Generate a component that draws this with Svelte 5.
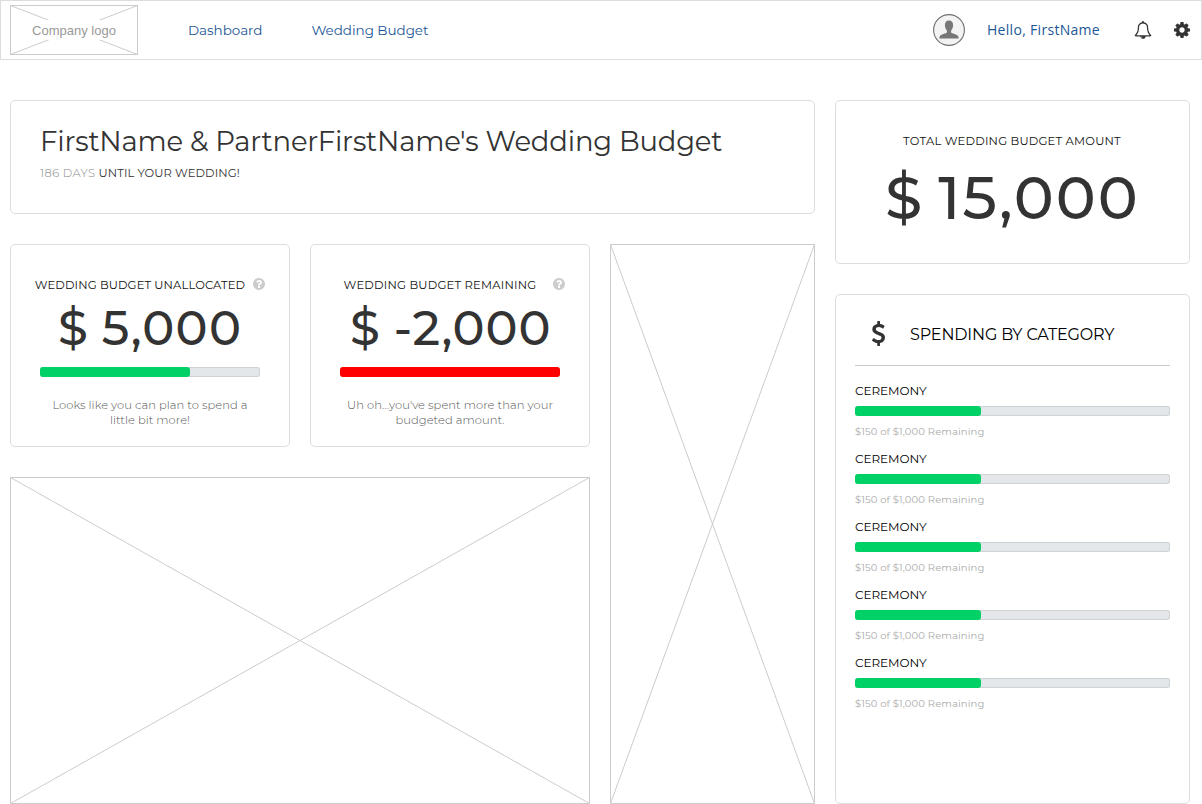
<script>
  const summaries = [
    {
      kind: 'unallocated',
      label: 'Wedding budget unallocated',
      amount: '5,000',
      percent: 68.2,
      color: '#00d166',
      lines: ['Looks like you can plan to spend a', 'little bit more!']
    },
    {
      kind: 'remaining',
      label: 'Wedding budget remaining',
      amount: '-2,000',
      percent: 100,
      color: '#ff0000',
      lines: ["Uh oh...you've spent more than your", 'budgeted amount.']
    }
  ];

  const categories = Array.from({ length: 5 }, () => ({
    name: 'Ceremony',
    percent: 40,
    note: '$150 of $1,000 Remaining'
  }));
</script>

{#snippet cross(w, h)}
  <svg class="cross" width={w} height={h} viewBox="0 0 {w} {h}" aria-hidden="true">
    <path d="M.5 .5L{w - 0.5} {h - 0.5}M{w - 0.5} .5L.5 {h - 0.5}" />
    <rect x=".5" y=".5" width={w - 1} height={h - 1} />
  </svg>
{/snippet}

{#snippet progress(percent, color)}
  <div class="track"><div class="fill" style="width:{percent}%;background:{color}"></div></div>
{/snippet}

<header>
  <div class="logo">
    {@render cross(128, 50)}
    <span>Company logo</span>
  </div>
  <nav>
    <a href="#dashboard">Dashboard</a>
    <a href="#budget">Wedding Budget</a>
  </nav>
  <div class="account">
    <svg class="avatar" width="32" height="32" viewBox="0 0 32 32" aria-hidden="true">
      <circle cx="16" cy="16" r="15.4" fill="#f3f3f3" stroke="#6e6e6e" stroke-width="1.1" />
      <path fill="#777" d="M16 6.600c2.800 0 4.100 2 4.100 4.700 0 2-.800 4-2 5.200v2c.300.900 6.500 1.600 7.300 4.300.200.700.300 1.100.300 1.600H6.300c0-.500.100-.900.300-1.600.800-2.700 7-3.400 7.300-4.300v-2c-1.200-1.200-2-3.200-2-5.200 0-2.700 1.300-4.700 4.100-4.700z" />
    </svg>
    <a class="hello" href="#profile">Hello, FirstName</a>
    <svg class="bell" width="18" height="18" viewBox="0 0 1792 1792" aria-hidden="true">
      <path d="M912 1696q0-16-16-16-59 0-101.500-42.500t-42.500-101.500q0-16-16-16t-16 16q0 73 51.500 124.500t124.500 51.500q16 0 16-16zm-666-288h1300q-266-300-266-832 0-51-24-105t-69-103-121.500-80.500-169.500-31.500-169.500 31.500-121.500 80.500-69 103-24 105q0 532-266 832zm1482 0q0 52-38 90t-90 38h-448q0 106-75 181t-181 75-181-75-75-181h-448q-52 0-90-38t-38-90q50-42 91-88t85-119.500 74.500-158.500 50-206 19.500-260q0-152 117-282.500t307-158.500q-8-19-8-39 0-40 28-68t68-28 68 28 28 68q0 20-8 39 190 28 307 158.500t117 282.500q0 139 19.500 260t50 206 74.500 158.500 85 119.500 91 88z" />
    </svg>
    <svg class="gear" width="16" height="16" viewBox="0 128 1536 1536" aria-hidden="true">
      <path d="M1024 896q0-106-75-181t-181-75-181 75-75 181 75 181 181 75 181-75 75-181zm512-109v222q0 12-8 23t-20 13l-185 28q-19 54-39 91 35 50 107 138 10 12 10 25t-9 23q-27 37-99 108t-94 71q-12 0-26-9l-138-108q-44 23-91 38-16 136-29 186-7 28-36 28h-222q-14 0-24.500-8.500t-11.500-21.500l-28-184q-49-16-90-37l-141 107q-10 9-25 9-14 0-25-11-126-114-165-168-7-10-7-23 0-12 8-23 15-21 51-66.500t54-70.500q-27-50-41-99l-183-27q-13-2-21-12.500t-8-23.500v-222q0-12 8-23t19-13l186-28q14-46 39-92-40-57-107-138-10-12-10-24 0-10 9-23 26-36 98.500-107.500t94.500-71.500q13 0 26 10l138 107q44-23 91-38 16-136 29-186 7-28 36-28h222q14 0 24.500 8.500t11.500 21.500l28 184q49 16 90 37l142-107q9-9 24-9 13 0 25 10 129 119 165 170 7 8 7 22 0 12-8 23-15 21-51 66.500t-54 70.500q26 50 41 98l183 28q13 2 21 12.500t8 23.500z" />
    </svg>
  </div>
</header>

<main>
  <div class="primary">
    <section class="card title">
      <h1>FirstName &amp; PartnerFirstName's Wedding Budget</h1>
      <p><span>186 Days</span> until your wedding!</p>
    </section>
    <div class="split">
      <div class="stack">
        <div class="summaries">
          {#each summaries as item}
            <section class="card summary {item.kind}">
              <div class="label-row">
                <h2>{item.label}</h2>
                <svg width="12" height="12" viewBox="0 128 1536 1536" aria-hidden="true">
                  <path d="M896 1376v-192q0-14-9-23t-23-9h-192q-14 0-23 9t-9 23v192q0 14 9 23t23 9h192q14 0 23-9t9-23zm256-672q0-88-55.500-163t-138.500-116-170-41q-243 0-371 213-15 24 8 42l132 100q7 6 19 6 16 0 25-12 53-68 86-92 34-24 86-24 48 0 85.500 26t37.500 59q0 38-20 61t-68 45q-63 28-115.500 86.500t-52.500 125.500v36q0 14 9 23t23 9h192q14 0 23-9t9-23q0-19 21.500-49.500t54.500-49.500q32-18 49-28.500t46-35 44.500-48 28-60.500 12.500-81zm384 192q0 209-103 385.500t-279.500 279.500-385.500 103-385.500-103-279.500-279.500-103-385.500 103-385.500 279.500-279.500 385.500-103 385.500 103 279.500 279.500 103 385.500z" />
                </svg>
              </div>
              <div class="amount"><span>$</span><span class="digits">{item.amount}</span></div>
              {@render progress(item.percent, item.color)}
              <p class="message">{item.lines[0]}<br />{item.lines[1]}</p>
            </section>
          {/each}
        </div>
        {@render cross(580, 327)}
      </div>
      {@render cross(205, 560)}
    </div>
  </div>

  <aside>
    <section class="card total">
      <h2>Total wedding budget amount</h2>
      <div class="amount"><span>$</span><span class="digits">15,000</span></div>
    </section>
    <section class="card spending">
      <div class="heading">
        <svg width="15" height="25" viewBox="0 0 1024 1792" aria-hidden="true">
          <path d="M978 1185q0 153-99.500 263.500t-258.500 136.500v175q0 14-9 23t-23 9h-135q-13 0-22.500-9.500t-9.500-22.500v-175q-66-9-127.500-31t-101.500-44.500-74-48-46.500-37.500-17.500-18q-17-21-2-41l103-135q7-10 23-12 15-2 24 9l2 2q113 99 243 125 37 8 74 8 81 0 142.500-43t61.500-122q0-28-15-53t-33.500-42-58.500-37.500-66-32-80-32.500q-39-16-61.500-25t-61.500-26.500-62.500-31-56.500-35.500-53.500-42.500-43.500-49-35.500-58-21-66.500-8.500-78q0-138 98-242t255-134v-180q0-13 9.500-22.500t22.500-9.500h135q14 0 23 9t9 23v176q57 6 110.500 23t87 33.500 63.500 37.500 39 29 15 14q17 18 5 38l-81 146q-8 15-23 16-14 3-27-7-3-3-14.500-12t-39-26.500-58.500-32-74.500-26-85.500-11.500q-95 0-155 43t-60 111q0 26 8.500 48t29.500 41.500 39.500 33 56 31 60.500 27 70 27.500q53 20 81 31.500t76 35 75.500 42.500 62 50 53 63.500 31.500 76.500 13 94z" />
        </svg>
        <h3>Spending by category</h3>
      </div>
      <ul>
        {#each categories as category}
          <li>
            <h4>{category.name}</h4>
            {@render progress(category.percent, '#00d166')}
            <p>{category.note}</p>
          </li>
        {/each}
      </ul>
    </section>
  </aside>
</main>

<style>
  :global(body) {
    background: #fff;
  }
  header,
  main {
    box-sizing: border-box;
    width: 1202px;
    font-family: Montserrat, Inter, sans-serif;
    color: #333;
  }
  h1, h2, h3, h4, p, ul {
    margin: 0;
    padding: 0;
    font-weight: 400;
    list-style: none;
  }
  svg {
    display: block;
    flex: none;
    fill: #333;
  }
  .cross {
    fill: none;
    stroke: #ccc;
  }
  header {
    height: 60px;
    border: 1px solid #ddd;
    padding: 0 11px 0 9px;
    display: flex;
    align-items: center;
  }
  .logo {
    display: grid;
    place-items: center;
    width: 128px;
    height: 50px;
  }
  .logo > :global(*) {
    grid-area: 1 / 1;
  }
  .logo span {
    padding: 3px 0 2px;
    background: #fff;
    color: #999;
    font: 13px/15px "Liberation Sans", Arial, sans-serif;
  }
  nav {
    display: flex;
    gap: 49px;
    margin-left: 50px;
  }
  a {
    color: #1c5796;
    text-decoration: none;
    font-size: 13.5px;
    line-height: 20px;
    letter-spacing: -0.04px;
  }
  .account {
    display: flex;
    align-items: center;
    margin-left: auto;
  }
  .account .hello {
    margin-left: 22px;
    width: 114px;
    font-family: "Open Sans", sans-serif;
    font-size: 14px;
    letter-spacing: 0.3px;
  }
  .bell {
    margin-left: 33px;
  }
  .gear {
    margin-left: 22px;
  }
  main {
    display: flex;
    gap: 20px;
    padding: 40px 12px 0 10px;
  }
  .primary {
    width: 805px;
  }
  .card {
    box-sizing: border-box;
    border: 1px solid #ddd;
    border-radius: 5px;
  }
  .title {
    height: 114px;
    padding: 22px 29px 0;
  }
  h1 {
    font-size: 27.5px;
    font-weight: 450;
    line-height: 36px;
    letter-spacing: -0.2px;
    white-space: nowrap;
  }
  .title p {
    margin-top: 6px;
    font-size: 11.5px;
    line-height: 16px;
    letter-spacing: 0.1px;
    text-transform: uppercase;
  }
  .title p span {
    font-weight: 300;
    letter-spacing: 0.4px;
    color: #888;
  }
  .split {
    display: flex;
    gap: 20px;
    margin-top: 30px;
  }
  .stack {
    display: flex;
    flex-direction: column;
    gap: 30px;
  }
  .summaries {
    display: flex;
    gap: 20px;
  }
  .summary {
    width: 280px;
    height: 203px;
    padding: 32px 29px 0;
  }
  .label-row {
    display: flex;
    align-items: center;
    margin: 0 -10px;
  }
  h2 {
    font-size: 11.5px;
    line-height: 16px;
    letter-spacing: 0.23px;
    text-align: center;
    text-transform: uppercase;
    white-space: nowrap;
    color: #111;
  }
  .total h2 {
    margin-left: -1px;
  }
  .label-row h2 {
    width: 220px;
  }
  .unallocated h2 {
    letter-spacing: 0.14px;
  }
  .label-row svg {
    margin: -2px 0 0 3px;
    fill: #ccc;
  }
  .amount {
    display: flex;
    font-weight: 460;
    white-space: nowrap;
  }
  .digits {
    letter-spacing: 1.3px;
  }
  .summary .amount {
    height: 74px;
    padding-left: 18px;
    gap: 14px;
    font-size: 48px;
    line-height: 70px;
  }
  .remaining .amount {
    padding-left: 10px;
  }
  .remaining .digits {
    letter-spacing: 0.9px;
  }
  .track {
    height: 10px;
    border-radius: 3px;
    background: #e3e7ea;
    box-shadow: inset 0 0 0 1px #ced3d6;
  }
  .fill {
    height: 100%;
    border-radius: 3px;
  }
  .message {
    margin: 21px -10px 0;
    font-size: 11.5px;
    font-weight: 300;
    line-height: 15px;
    letter-spacing: 0.05px;
    text-align: center;
    color: #555;
  }
  aside {
    width: 355px;
  }
  .total {
    height: 164px;
    padding: 32px 20px 0;
  }
  .total .amount {
    padding-left: 29px;
    gap: 16px;
    font-size: 60px;
    line-height: 98px;
  }
  .total .digits {
    letter-spacing: 2px;
  }
  .spending {
    height: 510px;
    margin-top: 30px;
    padding: 0 19px;
  }
  .heading {
    display: flex;
    align-items: center;
    box-sizing: border-box;
    height: 71px;
    padding: 7px 0 0 16px;
    border-bottom: 1px solid #ccc;
  }
  h3 {
    margin: 1px 0 0 24px;
    font-size: 16px;
    font-weight: 380;
    letter-spacing: -0.15px;
    text-transform: uppercase;
    color: #000;
  }
  ul {
    padding-top: 17px;
  }
  li {
    height: 68px;
  }
  h4 {
    margin-bottom: 7px;
    font-size: 12px;
    font-weight: 450;
    line-height: 16px;
    letter-spacing: -0.05px;
    text-transform: uppercase;
    color: #000;
  }
  li p {
    margin-top: 8px;
    font-size: 10px;
    line-height: 15px;
    letter-spacing: 0.12px;
    color: #aaa;
  }
</style>
